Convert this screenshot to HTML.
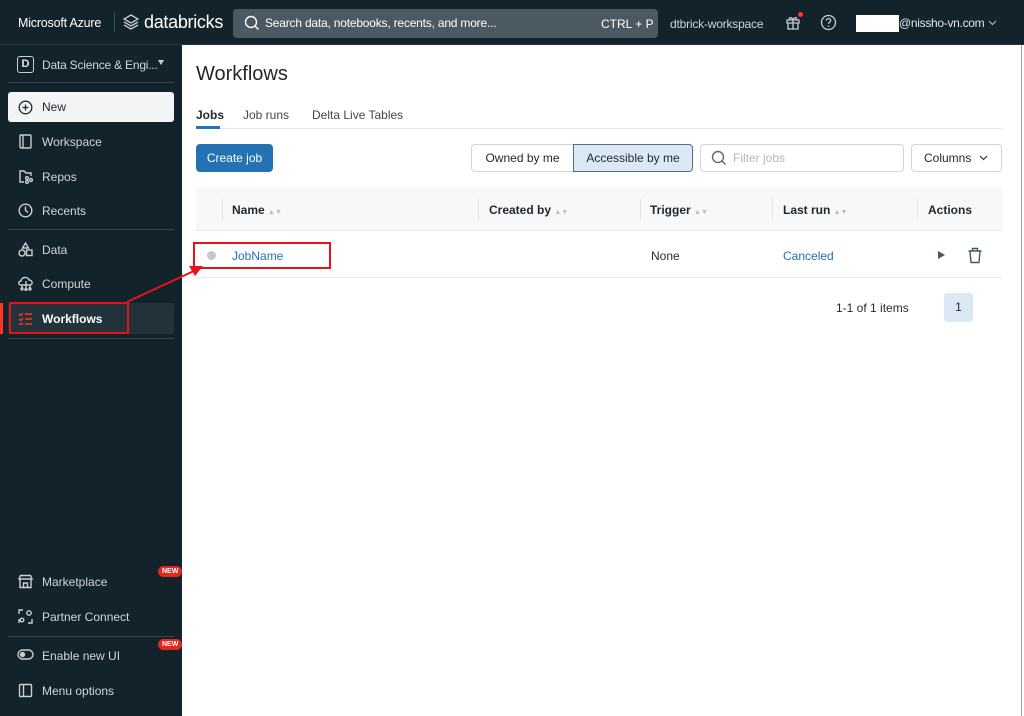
<!DOCTYPE html>
<html><head><meta charset="utf-8"><style>
*{margin:0;padding:0;box-sizing:border-box}
body{width:1024px;height:716px;overflow:hidden;font-family:"Liberation Sans",sans-serif;font-size:12px;color:#1f272d;background:#fff;position:relative}
.a{position:absolute}
#top{left:0;top:0;width:1024px;height:45px;background:#13232c;border-bottom:1px solid #22343d}
#side{left:0;top:45px;width:182px;height:671px;background:#13232c}
.t{color:#fff;white-space:nowrap}
.nav{color:#d0d6da;font-size:12px;white-space:nowrap}
.ic{stroke:#c8ced2;fill:none;stroke-width:1.4}
.sep{height:1px;background:#34444c;left:8px;width:166px}
.hd{color:#1f272d;font-weight:bold;font-size:12px;white-space:nowrap}
.sort{color:#b5bcc2;font-size:7px}
.new{background:#e5271c;color:#fff;font-size:7px;font-weight:bold;border-radius:7px;padding:2px 4px}
</style></head><body>
<div id="top" class="a">
 <div class="a t" style="left:18px;top:16px;font-size:12.5px;letter-spacing:-0.2px">Microsoft Azure</div>
 <div class="a" style="left:114px;top:12px;width:1px;height:20px;background:#3d4d55"></div>
 <svg class="a" style="left:123px;top:14px" width="16" height="16" viewBox="0 0 16 16"><path d="M8 1L15 5L8 9L1 5Z M1 8L8 12L15 8 M1 11L8 15L15 11" stroke="#c8ced2" fill="none" stroke-width="1.3"/></svg>
 <div class="a t" style="left:144px;top:12px;font-size:18px;letter-spacing:-0.3px">databricks</div>
 <div class="a" style="left:233px;top:9px;width:425px;height:29px;background:#4b5a62;border-radius:4px"></div>
 <svg class="a" style="left:244px;top:15px" width="16" height="16" viewBox="0 0 16 16"><circle cx="7" cy="7" r="5.5" stroke="#fff" fill="none" stroke-width="1.4"/><path d="M11 11L14.5 14.5" stroke="#fff" stroke-width="1.4"/></svg>
 <div class="a t" style="left:265px;top:16px;font-size:12px;letter-spacing:-0.2px">Search data, notebooks, recents, and more...</div>
 <div class="a t" style="left:601px;top:17px;font-size:12px">CTRL + P</div>
 <div class="a" style="left:670px;top:17px;color:#c8d6de;font-size:12px;letter-spacing:-0.2px">dtbrick-workspace</div>
 <svg class="a" style="left:785px;top:15px" width="16" height="16" viewBox="0 0 16 16"><path d="M2 5H14V8H2Z M3 8V14H13V8 M8 5V14 M8 5C6 1 3 3 5 5 M8 5C10 1 13 3 11 5" stroke="#c8ced2" fill="none" stroke-width="1.3"/></svg>
 <div class="a" style="left:798px;top:12px;width:5px;height:5px;border-radius:50%;background:#ff3b30"></div>
 <svg class="a" style="left:820px;top:14px" width="17" height="17" viewBox="0 0 17 17"><circle cx="8.5" cy="8.5" r="7" stroke="#c8ced2" fill="none" stroke-width="1.3"/><path d="M6.3 6.5C6.3 4 10.7 4 10.7 6.5C10.7 8 8.5 8 8.5 10" stroke="#c8ced2" fill="none" stroke-width="1.3"/><circle cx="8.5" cy="12.3" r=".8" fill="#c8ced2"/></svg>
 <div class="a" style="left:856px;top:15px;width:43px;height:17px;background:#fff"></div>
 <div class="a" style="left:899px;top:16px;color:#e0e6ea;font-size:12px;letter-spacing:-0.3px">@nissho-vn.com</div>
 <svg class="a" style="left:988px;top:20px" width="9" height="6" viewBox="0 0 9 6"><path d="M1 1L4.5 4.5L8 1" stroke="#aab4ba" fill="none" stroke-width="1.2"/></svg>
</div>
<div id="side" class="a">
 <div class="a" style="left:17px;top:11px;width:17px;height:17px;border:1.5px solid #c8ced2;border-radius:3px;color:#e0e6ea;font-size:11px;font-weight:bold;text-align:center;line-height:14px">D</div>
 <div class="a nav" style="left:42px;top:13px;letter-spacing:-0.2px">Data Science &amp; Engi...</div>
 <div class="a" style="left:158px;top:15px;width:0;height:0;border-top:5px solid #c8ced2;border-left:3.5px solid transparent;border-right:3.5px solid transparent"></div>
 <div class="a sep" style="top:37px"></div>
 <div class="a" style="left:8px;top:47px;width:166px;height:30px;background:#f3f4f5;border-radius:3px"></div>
 <svg class="a" style="left:18px;top:55px" width="15" height="15" viewBox="0 0 15 15"><circle cx="7.5" cy="7.5" r="6.3" stroke="#1f272d" fill="none" stroke-width="1.3"/><path d="M7.5 4.5V10.5M4.5 7.5H10.5" stroke="#1f272d" stroke-width="1.3"/></svg>
 <div class="a" style="left:42px;top:55px;font-size:12px;color:#1f272d">New</div>
 <svg class="a ic" style="left:18px;top:89px" width="15" height="15" viewBox="0 0 15 15"><rect x="2" y="1" width="11" height="13" rx="1"/><path d="M5 1V14"/></svg>
 <div class="a nav" style="left:42px;top:90px">Workspace</div>
 <svg class="a ic" style="left:18px;top:124px" width="15" height="15" viewBox="0 0 15 15"><path d="M6 13H2V2H6L8 4H13V7"/><circle cx="9" cy="9" r="1.4"/><circle cx="9" cy="13" r="1.4"/><circle cx="13" cy="11" r="1.4"/></svg>
 <div class="a nav" style="left:42px;top:125px">Repos</div>
 <svg class="a ic" style="left:18px;top:158px" width="15" height="15" viewBox="0 0 15 15"><circle cx="7.5" cy="7.5" r="6.3"/><path d="M7.5 3.5V7.5L10 9.5"/></svg>
 <div class="a nav" style="left:42px;top:159px">Recents</div>
 <div class="a sep" style="top:184px"></div>
 <svg class="a ic" style="left:18px;top:197px" width="15" height="15" viewBox="0 0 15 15"><path d="M7.5 1L10.5 6H4.5Z"/><circle cx="4" cy="11" r="3"/><rect x="8.5" y="8" width="5.5" height="5.5"/></svg>
 <div class="a nav" style="left:42px;top:198px">Data</div>
 <svg class="a ic" style="left:18px;top:231px" width="16" height="15" viewBox="0 0 16 15"><path d="M3 9C0 9 0 5 3 5C3 1 10 0 11 4C15 4 15 9 12 9Z M8 5V13 M4 9V12 M12 9V12"/><circle cx="4" cy="13" r="1"/><circle cx="8" cy="13.5" r="1"/><circle cx="12" cy="13" r="1"/></svg>
 <div class="a nav" style="left:42px;top:232px">Compute</div>
 <div class="a" style="left:8px;top:258px;width:166px;height:31px;background:#22333c;border-radius:3px"></div>
 <div class="a" style="left:0;top:258px;width:3px;height:31px;background:#ff3621"></div>
 <svg class="a" style="left:18px;top:266px" width="15" height="15" viewBox="0 0 15 15" stroke="#ff3621" fill="none" stroke-width="1.4"><path d="M1 3L2.5 4.5L5 2M7 3H14M1 8L2.5 9.5L5 7M7 8H14M1 13H5M7 13H14"/></svg>
 <div class="a" style="left:42px;top:267px;font-size:12px;color:#fff;font-weight:bold">Workflows</div>
 <div class="a" style="left:9px;top:257px;width:120px;height:32px;border:2px solid #e8121a"></div>
 <div class="a sep" style="top:293px"></div>
 <svg class="a ic" style="left:18px;top:529px" width="15" height="15" viewBox="0 0 15 15"><path d="M1 5L2.5 1.5H12.5L14 5Z M2 5V13.5H13V5 M5.5 13.5V9H9.5V13.5"/></svg>
 <div class="a nav" style="left:42px;top:530px">Marketplace</div>
 <div class="a new" style="left:158px;top:521px">NEW</div>
 <svg class="a ic" style="left:18px;top:564px" width="15" height="15" viewBox="0 0 15 15"><path d="M1 5V1H5 M10 14H14V10 M1 10V14"/><circle cx="4" cy="11" r="1.8"/><circle cx="11" cy="4" r="2.2"/></svg>
 <div class="a nav" style="left:42px;top:565px">Partner Connect</div>
 <div class="a sep" style="top:591px"></div>
 <svg class="a ic" style="left:17px;top:603px" width="17" height="13" viewBox="0 0 17 13"><rect x="1" y="2" width="15" height="9" rx="4.5"/><circle cx="5.5" cy="6.5" r="2" fill="#c8ced2"/></svg>
 <div class="a nav" style="left:42px;top:604px">Enable new UI</div>
 <div class="a new" style="left:158px;top:594px">NEW</div>
 <svg class="a ic" style="left:18px;top:638px" width="15" height="15" viewBox="0 0 15 15"><rect x="1.5" y="1.5" width="12" height="12" rx="1"/><path d="M5.5 1.5V13.5"/></svg>
 <div class="a nav" style="left:42px;top:639px">Menu options</div>
</div>
<div class="a" style="left:1021px;top:45px;width:1px;height:671px;background:#9aa0a4"></div>

<div class="a" style="left:196px;top:63px;font-size:20px;color:#1f272d">Workflows</div>
<div class="a" style="left:196px;top:108px;font-size:12px;font-weight:bold">Jobs</div>
<div class="a" style="left:243px;top:108px;font-size:12px;color:#444">Job runs</div>
<div class="a" style="left:312px;top:108px;font-size:12px;color:#444">Delta Live Tables</div>
<div class="a" style="left:196px;top:128px;width:806px;height:1px;background:#e4e8eb"></div>
<div class="a" style="left:196px;top:126px;width:24px;height:3px;background:#2272b4"></div>

<div class="a" style="left:196px;top:144px;width:77px;height:28px;background:#2272b4;border-radius:4px;color:#fff;text-align:center;line-height:28px;font-size:12px">Create job</div>
<div class="a" style="left:471px;top:144px;width:103px;height:28px;border:1px solid #cfd5da;border-radius:4px 0 0 4px;text-align:center;line-height:26px;font-size:12px">Owned by me</div>
<div class="a" style="left:573px;top:144px;width:120px;height:28px;border:1px solid #4e6f8c;background:#dce8f3;border-radius:0 4px 4px 0;text-align:center;line-height:26px;font-size:12px">Accessible by me</div>
<div class="a" style="left:700px;top:144px;width:204px;height:28px;border:1px solid #cfd5da;border-radius:4px"></div>
<svg class="a" style="left:711px;top:150px" width="16" height="16" viewBox="0 0 16 16"><circle cx="7" cy="7" r="5.5" stroke="#5f6b73" fill="none" stroke-width="1.4"/><path d="M11 11L14.5 14.5" stroke="#5f6b73" stroke-width="1.4"/></svg>
<div class="a" style="left:733px;top:151px;font-size:12px;color:#b0b8be">Filter jobs</div>
<div class="a" style="left:911px;top:144px;width:91px;height:28px;border:1px solid #cfd5da;border-radius:4px;font-size:12px;line-height:26px;padding-left:12px">Columns</div>
<svg class="a" style="left:979px;top:155px" width="9" height="6" viewBox="0 0 9 6"><path d="M1 1L4.5 4.5L8 1" stroke="#333" fill="none" stroke-width="1.2"/></svg>

<div class="a" style="left:196px;top:187px;width:806px;height:44px;background:#f7f8f9;border-bottom:1px solid #e9ecee"></div>
<div class="a" style="left:222px;top:199px;width:1px;height:20px;background:#e0e4e7"></div>
<div class="a hd" style="left:232px;top:203px">Name <span class="sort">&#9650;&#9660;</span></div>
<div class="a" style="left:478px;top:199px;width:1px;height:20px;background:#e0e4e7"></div>
<div class="a hd" style="left:489px;top:203px">Created by <span class="sort">&#9650;&#9660;</span></div>
<div class="a" style="left:640px;top:199px;width:1px;height:20px;background:#e0e4e7"></div>
<div class="a hd" style="left:650px;top:203px">Trigger <span class="sort">&#9650;&#9660;</span></div>
<div class="a" style="left:772px;top:199px;width:1px;height:20px;background:#e0e4e7"></div>
<div class="a hd" style="left:783px;top:203px">Last run <span class="sort">&#9650;&#9660;</span></div>
<div class="a" style="left:917px;top:199px;width:1px;height:20px;background:#e0e4e7"></div>
<div class="a hd" style="left:928px;top:203px">Actions</div>

<div class="a" style="left:207px;top:251px;width:9px;height:9px;border-radius:50%;background:#c4c8cb"></div>
<div class="a" style="left:232px;top:249px;font-size:12px;color:#2272b4">JobName</div>
<div class="a" style="left:193px;top:242px;width:138px;height:27px;border:2px solid #e8121a"></div>
<div class="a" style="left:651px;top:249px;font-size:12px">None</div>
<div class="a" style="left:783px;top:249px;font-size:12px;color:#2272b4">Canceled</div>
<div class="a" style="left:938px;top:251px;width:0;height:0;border-left:7px solid #4a5760;border-top:4.5px solid transparent;border-bottom:4.5px solid transparent"></div>
<svg class="a" style="left:967px;top:247px" width="16" height="17" viewBox="0 0 16 17" stroke="#4a5760" fill="none" stroke-width="1.4"><path d="M1.5 4H14.5 M5.5 4V1.5H10.5V4 M3 4L4 15.5H12L13 4"/></svg>
<div class="a" style="left:196px;top:277px;width:806px;height:1px;background:#e9ecee"></div>

<div class="a" style="left:836px;top:301px;font-size:12px">1-1 of 1 items</div>
<div class="a" style="left:944px;top:293px;width:29px;height:29px;background:#dce8f3;border-radius:3px;text-align:center;line-height:29px;font-size:12px">1</div>

<svg class="a" style="left:0;top:0" width="1024" height="716"><path d="M127 302L196 270" stroke="#e8121a" stroke-width="2"/><path d="M203 266L189 266L195 276Z" fill="#e8121a"/></svg>
</body></html>
